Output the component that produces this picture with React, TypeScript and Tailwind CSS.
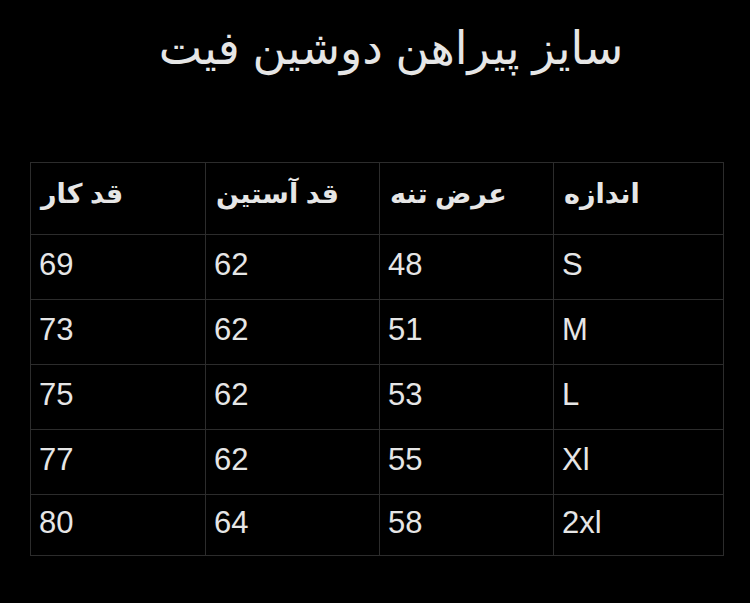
import React from 'react';

const headers = ['اندازه', 'عرض تنه', 'قد آستین', 'قد کار'];

const rows = [
  ['S', '48', '62', '69'],
  ['M', '51', '62', '73'],
  ['L', '53', '62', '75'],
  ['Xl', '55', '62', '77'],
  ['2xl', '58', '64', '80'],
];

const font = { fontFamily: '"Liberation Sans", "DejaVu Sans", sans-serif' };

export default function App() {
  return (
    <div className="w-[750px] h-[603px] bg-black text-[#e6e6e6] overflow-hidden" style={font}>
      <h1 dir="rtl" className="pt-[18px] pl-[32px] text-center text-[46px] leading-[60px] font-normal">
        سایز پیراهن دوشین فیت
      </h1>

      <div dir="rtl" className="mt-[84px] ml-[30px] w-[694px] border border-[#2c2c2c]">
        <div className="grid grid-cols-[170px_174px_174px_1fr] h-[72px] border-b border-[#2c2c2c]">
          {headers.map((h, i) => (
            <div
              key={h}
              className={`flex items-center justify-end pl-[10px] pb-[8px] text-[27px] font-bold ${i < 3 ? 'border-l border-[#2c2c2c]' : ''}`}
            >
              {h}
            </div>
          ))}
        </div>
        {rows.map((r, ri) => (
          <div
            key={ri}
            className={`grid grid-cols-[170px_174px_174px_1fr] ${ri < rows.length - 1 ? 'h-[65px] border-b border-[#2c2c2c]' : 'h-[60px]'}`}
          >
            {r.map((c, i) => (
              <div
                key={i}
                dir="ltr"
                className={`flex items-center pl-[8px] pb-[3px] text-[31px] ${i < 3 ? 'border-l border-[#2c2c2c]' : ''}`}
              >
                {c}
              </div>
            ))}
          </div>
        ))}
      </div>
    </div>
  );
}
